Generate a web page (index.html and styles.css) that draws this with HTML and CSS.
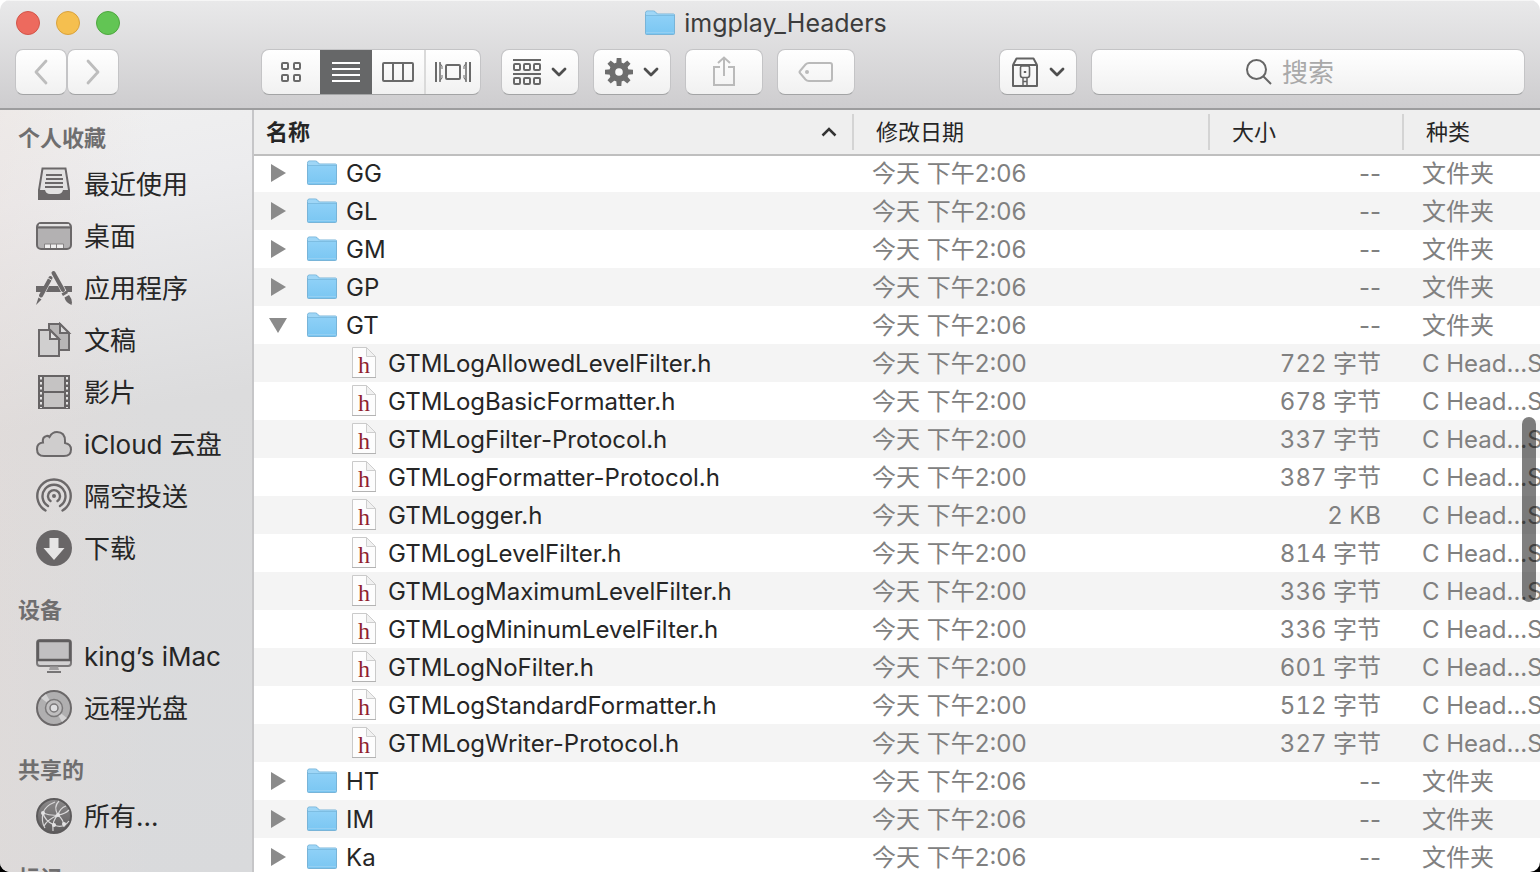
FILE: index.html
```html
<!DOCTYPE html>
<html lang="zh-CN">
<head>
<meta charset="utf-8">
<title>imgplay_Headers</title>
<link rel="stylesheet" href="styles.css">
</head>
<body>
<svg class="sprite" aria-hidden="true">
  <defs>
    <linearGradient id="folder-fill" x1="0" y1="0" x2="0" y2="1"><stop offset="0" stop-color="#93d3f8"/><stop offset="1" stop-color="#7ac6f2"/></linearGradient>
    <linearGradient id="globe-fill" x1="0" y1="0" x2="0" y2="1"><stop offset="0" stop-color="#8c8a8b"/><stop offset="1" stop-color="#5e5c5d"/></linearGradient>
    <symbol id="folder" viewBox="0 0 30 26">
      <path d="M.5 3.500Q.5 1 2 1H8.500Q10 1 11 2.500L12.500 4H28.500Q29.500 4 29.500 5V23.500Q29.500 24.500 28.500 24.500H1.500Q.5 24.500 .5 23.500Z" fill="url(#folder-fill)" stroke="#78b4d8" stroke-width="1"/>
      <path d="M1 3Q1 1.500 2.500 1.500H8.500L11.500 4.500H29V5.500H1Z" fill="#9fd6f6"/>
      <path d="M1 5.500H29" stroke="#7dbde2"/>
      <path d="M1 22.500H29" stroke="#94cff2"/>
    </symbol>
    <symbol id="header-file" viewBox="0 0 24 32">
      <path d="M.5 .5H14.500L23.500 9.500V30.500H.5Z" fill="#fdfdfd" stroke="#cacaca"/>
      <path d="M14.500 .5V9.500H23.500Z" fill="#f1f1f1" stroke="#cecece"/>
      <path d="M0 30.500H24" stroke="#b3b3b3"/>
      <text x="12" y="26" text-anchor="middle" class="file-letter">h</text>
    </symbol>
    <symbol id="chevron" viewBox="0 0 16 10"><path d="M2 2L8 8L14 2" fill="none" stroke="#4e4e4e" stroke-width="2.800" stroke-linecap="round" stroke-linejoin="round"/></symbol>
    <symbol id="closed" viewBox="0 0 20 20"><path d="M3 1L18 10L3 19Z" fill="#8b8b8b"/></symbol>
    <symbol id="open" viewBox="0 0 20 20"><path d="M1 3H19L10 18Z" fill="#8b8b8b"/></symbol>
  </defs>
</svg>

<div class="window">
  <header class="titlebar">
    <div class="title-row">
      <div class="lights">
        <button class="light close" aria-label="关闭"></button>
        <button class="light minimise" aria-label="最小化"></button>
        <button class="light zoom" aria-label="缩放"></button>
      </div>
      <h1 class="title"><svg class="folder" aria-hidden="true"><use href="#folder"/></svg>imgplay_Headers</h1>
    </div>
    <div class="toolbar">
      <div class="nav">
        <button class="tool back" aria-label="后退" disabled><svg width="16" height="26" viewBox="0 0 16 26" fill="none" stroke="#bdbdbd" stroke-width="2.800" stroke-linecap="round" stroke-linejoin="round"><path d="M13 2L3 13L13 24"/></svg></button>
        <button class="tool forward" aria-label="前进" disabled><svg width="16" height="26" viewBox="0 0 16 26" fill="none" stroke="#bdbdbd" stroke-width="2.800" stroke-linecap="round" stroke-linejoin="round"><path d="M3 2L13 13L3 24"/></svg></button>
      </div>
      <div class="views">
        <button class="view" aria-label="图标"><svg width="22" height="22" viewBox="0 0 22 22" fill="none" stroke="#6a6a6a" stroke-width="2"><rect x="2" y="2" width="6" height="6" rx="1"/><rect x="14" y="2" width="6" height="6" rx="1"/><rect x="2" y="14" width="6" height="6" rx="1"/><rect x="14" y="14" width="6" height="6" rx="1"/></svg></button>
        <button class="view selected" aria-label="列表" aria-pressed="true"><svg width="28" height="20" viewBox="0 0 28 20" stroke="#fff" stroke-width="2"><path d="M0 1H28M0 7H28M0 13H28M0 19H28"/></svg></button>
        <button class="view" aria-label="分栏"><svg width="32" height="20" viewBox="0 0 32 20" fill="none" stroke="#6a6a6a" stroke-width="2"><rect x="1" y="1" width="30" height="18" rx="1"/><path d="M11 1V19M21 1V19"/></svg></button>
        <button class="view" aria-label="封面流"><svg width="36" height="20" viewBox="0 0 36 20" fill="none" stroke="#6a6a6a" stroke-width="2"><path d="M1 0V20M35 0V20"/><path d="M5 0V20M31 0V20" stroke-width="1.500"/><path d="M5 1.500L7 4V7M5 18.500L7 16V13M31 1.500L29 4V7M31 18.500L29 16V13" stroke-width="1"/><rect x="11" y="3" width="14" height="14" rx="1"/></svg></button>
      </div>
      <div class="actions">
        <button class="tool" aria-label="排列"><svg width="28" height="28" viewBox="0 0 28 28" fill="none" stroke="#686868" stroke-width="2"><path d="M0 2H28M0 16H28"/><rect x="1" y="6" width="6" height="6" rx="1"/><rect x="11" y="6" width="6" height="6" rx="1"/><rect x="21" y="6" width="6" height="6" rx="1"/><rect x="1" y="20" width="6" height="6" rx="1"/><rect x="11" y="20" width="6" height="6" rx="1"/><rect x="21" y="20" width="6" height="6" rx="1"/></svg><svg class="chevron"><use href="#chevron"/></svg></button>
        <button class="tool" aria-label="操作"><svg width="28" height="28" viewBox="-14 -14 28 28"><g fill="#6d6d6d"><path id="tooth" d="M-2.800 -8L-2.300 -14H2.300L2.800 -8Z"/><use href="#tooth" transform="rotate(45)"/><use href="#tooth" transform="rotate(90)"/><use href="#tooth" transform="rotate(135)"/><use href="#tooth" transform="rotate(180)"/><use href="#tooth" transform="rotate(225)"/><use href="#tooth" transform="rotate(270)"/><use href="#tooth" transform="rotate(315)"/></g><circle r="6.800" fill="none" stroke="#6d6d6d" stroke-width="6"/></svg><svg class="chevron"><use href="#chevron"/></svg></button>
        <button class="tool" aria-label="共享" disabled><svg width="24" height="32" viewBox="0 0 24 32" fill="none" stroke="#bababa" stroke-width="2"><path d="M8 11H2V29H22V11H16M12 20V2M6 7L12 1.500L18 7"/></svg></button>
        <button class="tool" aria-label="标签" disabled><svg width="36" height="22" viewBox="0 0 36 22" fill="none" stroke="#bababa" stroke-width="2"><path d="M11 2H32Q34 2 34 4V18Q34 20 32 20H11Q9 20 7.500 18.500L2 12Q1 11 2 10L7.500 3.500Q9 2 11 2Z"/><circle cx="9" cy="11" r="2" fill="#bababa" stroke="none"/></svg></button>
      </div>
      <button class="tool archive" aria-label="归档"><svg width="28" height="30" viewBox="0 0 28 30" fill="none" stroke="#636363" stroke-width="2"><path d="M2 8L5.500 1.500H22.500L26 8M2 8H26V29H2Z" stroke-linejoin="round"/><path d="M11 9H17Q18.500 9 18.500 10.500V18Q18.500 20.500 16.500 20.500H11.500Q9.500 20.500 9.500 18V10.500Q9.500 9 11 9Z" stroke-width="1.600"/><path d="M14 14V16" stroke-width="2.400"/><path d="M12 21V29M16 21V29M12 24.500H16" stroke-width="1.500"/></svg><svg class="chevron"><use href="#chevron"/></svg></button>
      <label class="search"><svg width="26" height="26" viewBox="0 0 26 26" fill="none" stroke="#666" stroke-width="2"><circle cx="10.500" cy="10.500" r="9.500"/><path d="M17.500 17.500L25 25"/></svg><input type="search" placeholder="搜索" aria-label="搜索"></label>
    </div>
  </header>

  <div class="content">
    <nav class="sidebar" aria-label="边栏">
      <section>
        <h2>个人收藏</h2>
        <a href="#"><svg viewBox="0 0 36 36"><path d="M6.500 2.500H29.500L33 24V33H3V24Z" fill="#e2e1e1" stroke="#6b6869" stroke-width="2"/><path d="M2.500 24H9Q10 28 14 28H22Q26 28 27 24H33.500V32Q33.500 34 31.500 34H4.500Q2.500 34 2.500 32Z" fill="#6b6869"/><path d="M10 9H26M10 13H27M9 17H27M9 21H27" stroke="#6b6869" stroke-width="2"/></svg>最近使用</a>
        <a href="#"><svg viewBox="0 0 36 36"><rect x="1" y="5" width="34" height="26" rx="4" fill="#b3b1b2" stroke="#6b6869" stroke-width="2"/><path d="M3 7H33" stroke="#e4e3e3" stroke-width="2"/><path d="M1 9.500H35" stroke="#6b6869" stroke-width="2"/><path d="M9 26H27V30H9Z" fill="#f0efef"/><path d="M8.500 30V26H27.500V30M14.500 26V30M20.500 26V30" fill="none" stroke="#858283"/></svg>桌面</a>
        <a href="#"><svg viewBox="0 0 36 36"><path d="M0 16H9L6 22H0ZM13 16H22L25 22H10ZM28 16H36V22H31Z" fill="#6b6869"/><path d="M14.500 8L5 25.500M17.500 3L27 20" stroke="#6b6869" stroke-width="4" stroke-linecap="round"/><path d="M12 8L17 11" stroke="#dddcdc" stroke-width="1"/><path d="M2.500 27.500L5.500 29.500L0 35Z" fill="#6b6869"/><path d="M25.500 23.500L30.500 20.500L32 23L27 26Z" fill="#6b6869"/><path d="M28.500 27.500L33 25Q37 30 35.500 35Q29.500 32.500 28.500 27.500Z" fill="#6b6869"/></svg>应用程序</a>
        <a href="#"><svg viewBox="0 0 36 36"><path d="M13 2H24L33 11V28H13Z" fill="#b8b6b6" stroke="#6b6869" stroke-width="2"/><path d="M24 2V11H33Z" fill="#dddcdc" stroke="#6b6869" stroke-width="2"/><path d="M3 8H14L23 17V34H3Z" fill="#d0cfcf" stroke="#6b6869" stroke-width="2"/><path d="M14 8V17H23Z" fill="#e3e2e2" stroke="#6b6869" stroke-width="2"/></svg>文稿</a>
        <a href="#"><svg viewBox="0 0 36 36"><path d="M2 1H34V35H2Z" fill="#666364"/><path d="M8 3H28V17H8ZM8 19H28V33H8Z" fill="#c5c3c3"/><path d="M5 3V34M31 3V34" stroke="#e3e2e2" stroke-width="2" stroke-dasharray="2.500 2.500"/></svg>影片</a>
        <a href="#"><svg viewBox="0 0 36 36"><path d="M8 30Q1 30 1 23Q1 17 7 16.500Q6 11 10.500 10Q12 9.500 13.500 11Q16 6 21 6Q29 6 29 15V17Q35 18 35 23.500Q35 30 28 30Z" fill="#cfcdcd" stroke="#6b6869" stroke-width="2"/></svg>iCloud 云盘</a>
        <a href="#"><svg viewBox="0 0 36 36" fill="none" stroke="#6b6869" stroke-width="2.400" stroke-linecap="round"><circle cx="18" cy="18" r="2" fill="#6b6869" stroke="none"/><path d="M14.500 23A6 6 0 1 1 21.500 23M12 28A11.500 11.500 0 1 1 24 28M9.500 32.500A16.700 16.700 0 1 1 26.500 32.500"/></svg>隔空投送</a>
        <a href="#"><svg viewBox="0 0 36 36"><circle cx="18" cy="18" r="18" fill="#696667"/><path d="M13.500 8H22.500V18H28.500L18 30L7.500 18H13.500Z" fill="#e6e5e5"/></svg>下载</a>
      </section>
      <section>
        <h2>设备</h2>
        <a href="#"><svg viewBox="0 0 36 36"><rect x="1" y="2" width="34" height="26" rx="3" fill="#d2d1d2" stroke="#7b797a" stroke-width="2"/><path d="M3 3.500H33V21.500H3Z" fill="#c1c0c1"/><path d="M2 22V4Q2 3 4 3H32Q34 3 34 4V22Z" fill="none" stroke="#5f5d5e" stroke-width="2.400"/><path d="M14 28.500H22L23 32H13Z" fill="#a19fa0"/><path d="M11 34H25" stroke="#777576" stroke-width="2"/></svg>king’s iMac</a>
        <a href="#"><svg viewBox="0 0 36 36"><circle cx="18" cy="18" r="17" fill="#b0afb0" stroke="#6b6869" stroke-width="2"/><path d="M18 18L5 8L10 4ZM18 18L31 28L26 32Z" fill="#d3d2d3"/><circle cx="18" cy="18" r="8.500" fill="#bfbebf" stroke="#7a7879" stroke-width="1.500"/><circle cx="18" cy="18" r="4" fill="#dedee0" stroke="#7a7879" stroke-width="1.500"/></svg>远程光盘</a>
      </section>
      <section>
        <h2>共享的</h2>
        <a href="#"><svg viewBox="0 0 36 36"><circle cx="18" cy="18" r="17" fill="url(#globe-fill)" stroke="#5c5a5b" stroke-width="2"/><g fill="none" stroke="#d9d8d9" stroke-width="1.200"><path d="M7 15Q9 8 19 4M7 15Q15 18 22 17T33 12M22 17Q17 9 23 3M22 17Q24 10 30 8M22 17Q16 22 17 33M22 17Q28 22 28 29M7 15Q5 24 9 30M7 15Q9 23 18 27T33 23M22 17Q11 22 8 28"/></g><g fill="#e4e3e4"><circle cx="22" cy="17" r="2"/><circle cx="7" cy="15" r="2"/><circle cx="18" cy="27" r="2"/><circle cx="28" cy="26" r="2"/></g></svg>所有...</a>
      </section>
      <section>
        <h2>标记</h2>
      </section>
    </nav>

    <main class="files">
      <table>
        <colgroup><col><col class="col-date"><col class="col-size"><col class="col-kind"></colgroup>
        <thead>
          <tr><th class="sorted" aria-sort="ascending"><div class="sort">名称<svg width="16" height="10" viewBox="0 0 16 10" fill="none" stroke="#333" stroke-width="2.500"><path d="M1.500 8.500L8 2L14.500 8.500"/></svg></div></th><th>修改日期</th><th>大小</th><th>种类</th></tr>
        </thead>
        <tbody>
          <tr><td><div class="name"><button class="toggle" aria-label="展开 GG"><svg><use href="#closed"/></svg></button><svg class="folder"><use href="#folder"/></svg>GG</div></td><td>今天 下午2:06</td><td>--</td><td>文件夹</td></tr>
          <tr><td><div class="name"><button class="toggle" aria-label="展开 GL"><svg><use href="#closed"/></svg></button><svg class="folder"><use href="#folder"/></svg>GL</div></td><td>今天 下午2:06</td><td>--</td><td>文件夹</td></tr>
          <tr><td><div class="name"><button class="toggle" aria-label="展开 GM"><svg><use href="#closed"/></svg></button><svg class="folder"><use href="#folder"/></svg>GM</div></td><td>今天 下午2:06</td><td>--</td><td>文件夹</td></tr>
          <tr><td><div class="name"><button class="toggle" aria-label="展开 GP"><svg><use href="#closed"/></svg></button><svg class="folder"><use href="#folder"/></svg>GP</div></td><td>今天 下午2:06</td><td>--</td><td>文件夹</td></tr>
          <tr><td><div class="name"><button class="toggle" aria-label="折叠 GT" aria-expanded="true"><svg><use href="#open"/></svg></button><svg class="folder"><use href="#folder"/></svg>GT</div></td><td>今天 下午2:06</td><td>--</td><td>文件夹</td></tr>
          <tr><td><div class="name child"><svg class="file"><use href="#header-file"/></svg>GTMLogAllowedLevelFilter.h</div></td><td>今天 下午2:00</td><td class="bytes">722 字节</td><td>C Head...S</td></tr>
          <tr><td><div class="name child"><svg class="file"><use href="#header-file"/></svg>GTMLogBasicFormatter.h</div></td><td>今天 下午2:00</td><td class="bytes">678 字节</td><td>C Head...S</td></tr>
          <tr><td><div class="name child"><svg class="file"><use href="#header-file"/></svg>GTMLogFilter-Protocol.h</div></td><td>今天 下午2:00</td><td class="bytes">337 字节</td><td>C Head...S</td></tr>
          <tr><td><div class="name child"><svg class="file"><use href="#header-file"/></svg>GTMLogFormatter-Protocol.h</div></td><td>今天 下午2:00</td><td class="bytes">387 字节</td><td>C Head...S</td></tr>
          <tr><td><div class="name child"><svg class="file"><use href="#header-file"/></svg>GTMLogger.h</div></td><td>今天 下午2:00</td><td class="bytes">2 KB</td><td>C Head...S</td></tr>
          <tr><td><div class="name child"><svg class="file"><use href="#header-file"/></svg>GTMLogLevelFilter.h</div></td><td>今天 下午2:00</td><td class="bytes">814 字节</td><td>C Head...S</td></tr>
          <tr><td><div class="name child"><svg class="file"><use href="#header-file"/></svg>GTMLogMaximumLevelFilter.h</div></td><td>今天 下午2:00</td><td class="bytes">336 字节</td><td>C Head...S</td></tr>
          <tr><td><div class="name child"><svg class="file"><use href="#header-file"/></svg>GTMLogMininumLevelFilter.h</div></td><td>今天 下午2:00</td><td class="bytes">336 字节</td><td>C Head...S</td></tr>
          <tr><td><div class="name child"><svg class="file"><use href="#header-file"/></svg>GTMLogNoFilter.h</div></td><td>今天 下午2:00</td><td class="bytes">601 字节</td><td>C Head...S</td></tr>
          <tr><td><div class="name child"><svg class="file"><use href="#header-file"/></svg>GTMLogStandardFormatter.h</div></td><td>今天 下午2:00</td><td class="bytes">512 字节</td><td>C Head...S</td></tr>
          <tr><td><div class="name child"><svg class="file"><use href="#header-file"/></svg>GTMLogWriter-Protocol.h</div></td><td>今天 下午2:00</td><td class="bytes">327 字节</td><td>C Head...S</td></tr>
          <tr><td><div class="name"><button class="toggle" aria-label="展开 HT"><svg><use href="#closed"/></svg></button><svg class="folder"><use href="#folder"/></svg>HT</div></td><td>今天 下午2:06</td><td>--</td><td>文件夹</td></tr>
          <tr><td><div class="name"><button class="toggle" aria-label="展开 IM"><svg><use href="#closed"/></svg></button><svg class="folder"><use href="#folder"/></svg>IM</div></td><td>今天 下午2:06</td><td>--</td><td>文件夹</td></tr>
          <tr><td><div class="name"><button class="toggle" aria-label="展开 Ka"><svg><use href="#closed"/></svg></button><svg class="folder"><use href="#folder"/></svg>Ka</div></td><td>今天 下午2:06</td><td>--</td><td>文件夹</td></tr>
        </tbody>
      </table>
      <div class="scroll-thumb"></div>
    </main>
  </div>
</div>
</body>
</html>
```
FILE: styles.css
```css
* { box-sizing: border-box; }

body {
  margin: 0;
  background: linear-gradient(#fff 50%, #000 50%);
  font-family: Inter, "Noto Sans CJK SC", sans-serif;
  color: #262626;
}

button {
  margin: 0;
  padding: 0;
  border: 0;
  background: none;
}

svg { display: block; flex: none; }
.sprite { position: absolute; width: 0; height: 0; }

.window {
  display: flex;
  flex-direction: column;
  height: 100vh;
  overflow: hidden;
  border-radius: 10px;
  background: #fff;
}

/* Title bar */
.titlebar {
  flex: none;
  height: 110px;
  background: linear-gradient(#e9e9ea, #cecdcf);
  border-bottom: 2px solid #9d9d9e;
  box-shadow: inset 0 1px #f6f6f6;
}

.title-row {
  display: grid;
  grid-template-columns: 1fr auto 1fr;
  align-items: center;
  height: 45px;
  padding: 0 24px 0 16px;
}

.lights { display: flex; gap: 16px; }
.light { width: 24px; height: 24px; border: 1px solid; border-radius: 50%; }
.close { background: #ed6a5e; border-color: #d35549; }
.minimise { background: #f5bf4f; border-color: #d9a23d; }
.zoom { background: #62c554; border-color: #4ea73f; }

.title {
  display: flex;
  align-items: center;
  gap: 9px;
  margin: 0;
  font-size: 25px;
  font-weight: 400;
  line-height: 32px;
  color: #3c3c3c;
}

.folder { width: 30px; height: 26px; }

.toolbar {
  display: flex;
  height: 54px;
  padding: 4px 15px;
}

.tool, .views, .search {
  height: 46px;
  border: 1px solid #c4c4c6;
  border-bottom-color: #a3a4a5;
  border-radius: 8px;
  background: linear-gradient(#fff, #f1f1f1);
}

.tool {
  display: flex;
  align-items: center;
  justify-content: center;
  gap: 10px;
  width: 78px;
}

.nav { display: flex; margin-right: 142px; }
.nav .tool { width: 52px; }

.views { display: flex; margin-right: 20px; overflow: hidden; }
.view {
  display: flex;
  align-items: center;
  justify-content: center;
  width: 54px;
  border-right: 2px solid #dadada;
}
.view:first-child { width: 58px; border: 0; }
.view:last-child { border: 0; }
.selected { width: 52px; margin: -1px 0; border: 0; background: #666768; }

.actions { display: flex; gap: 14px; margin-right: 144px; }
.chevron { width: 16px; height: 10px; }
.archive { margin-right: 14px; }

.search {
  flex: 1;
  display: flex;
  align-items: center;
  justify-content: center;
  gap: 10px;
}
.search input {
  width: 88px;
  padding: 2px 0 0;
  border: 0;
  outline: 0;
  background: none;
  font: inherit;
  font-size: 26px;
  line-height: 36px;
}
.search input::placeholder { color: #a9a9a9; opacity: 1; }

/* Sidebar */
.content { display: flex; flex: 1; min-height: 0; }

.sidebar {
  flex: none;
  width: 254px;
  padding-top: 8px;
  overflow: hidden;
  border-right: 2px solid #c6c6c8;
  background:
    linear-gradient(90deg, rgba(232, 218, 212, .3), rgba(232, 218, 212, 0) 60%),
    linear-gradient(170deg, #f0f0f0, #ececee 12%, #dcdcdd 40%, #d9dadc);
}

.sidebar section { margin-bottom: 16px; }

.sidebar h2 {
  margin: 0;
  padding-left: 18px;
  font-size: 22px;
  font-weight: 700;
  line-height: 40px;
  color: #6f6e6f;
}

.sidebar a {
  display: flex;
  align-items: center;
  gap: 12px;
  height: 52px;
  padding: 2px 0 0 36px;
  font-size: 26px;
  line-height: 50px;
  white-space: nowrap;
  text-decoration: none;
  color: #262626;
}
.sidebar svg { width: 36px; height: 36px; margin-bottom: 2px; }

/* File list */
.files {
  position: relative;
  flex: 1;
  min-width: 0;
  overflow: hidden;
}

table {
  width: 100%;
  table-layout: fixed;
  border-collapse: separate;
  border-spacing: 0;
  font-size: 24px;
  line-height: 36px;
  white-space: nowrap;
}

.col-date { width: 356px; }
.col-size { width: 194px; }
.col-kind { width: 136px; }

thead { position: relative; box-shadow: 0 2px #bfbfbf; z-index: 1; }

th {
  height: 44px;
  padding: 0 0 0 22px;
  background: linear-gradient(#d4d4d4, #d4d4d4) right center / 2px 36px no-repeat #efefef;
  font-size: 22px;
  font-weight: 400;
  line-height: 44px;
  text-align: left;
}
th:last-child { background: #efefef; }
.sorted { padding-left: 12px; font-weight: 700; }
.sort {
  display: flex;
  align-items: center;
  justify-content: space-between;
  padding-right: 17px;
}

td {
  height: 38px;
  padding: 2px 0 0 18px;
  overflow: hidden;
  color: #808080;
}
td:first-child { padding: 0; color: #262626; }
td:nth-child(3) { padding: 2px 23px 0 0; text-align: right; }
.bytes { font-variant-numeric: tabular-nums; }
tbody tr:nth-child(even) { background: #f4f4f4; }

.name {
  display: flex;
  align-items: center;
  gap: 9px;
  height: 38px;
  padding: 2px 0 0 14px;
}
.name svg { margin-bottom: 2px; }
.toggle { width: 20px; height: 20px; margin: 0 10px 2px 0; }
.toggle svg { width: 20px; height: 20px; }

.child { gap: 12px; padding-left: 98px; }
.file { width: 24px; height: 32px; }
.file-letter { font: 24px "Liberation Serif", serif; fill: #8f1f2e; }

.scroll-thumb {
  position: absolute;
  z-index: 2;
  top: 307px;
  right: 4px;
  width: 14px;
  height: 185px;
  border-radius: 7px;
  background: rgba(0, 0, 0, .5);
}
```
